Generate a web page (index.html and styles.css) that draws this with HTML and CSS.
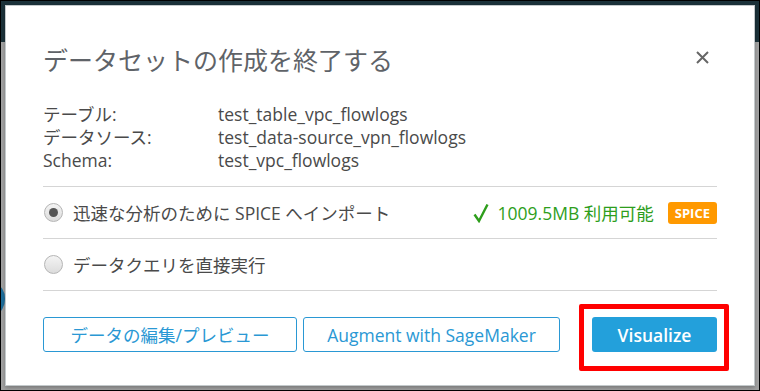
FILE: index.html
```html
<!DOCTYPE html>
<html lang="ja">
<head>
  <meta charset="UTF-8">
  <title>データセットの作成を終了する</title>
  <link rel="stylesheet" href="styles.css">
</head>
<body>
  <div class="screen">
    <span class="bg-dot"></span>
    <div class="modal">
      <div class="modal-head">
        <h1>データセットの作成を終了する</h1>
        <svg class="close" width="13" height="13" viewBox="0 0 13 13"><path d="M1 1 L12 12 M12 1 L1 12" stroke="#666" stroke-width="2"/></svg>
      </div>

      <div class="info">
        <div class="info-row"><span class="info-key">テーブル:</span><span>test_table_vpc_flowlogs</span></div>
        <div class="info-row"><span class="info-key">データソース:</span><span>test_data-source_vpn_flowlogs</span></div>
        <div class="info-row"><span class="info-key">Schema:</span><span>test_vpc_flowlogs</span></div>
      </div>

      <div class="options">
        <div class="option">
          <span class="radio checked"></span>
          <span class="option-label">迅速な分析のために SPICE へインポート</span>
          <span class="capacity">
            <svg class="check" width="16" height="20" viewBox="0 0 16 20"><path d="M1.5 11.5 L6 18 L14.5 1.5" fill="none" stroke="#2e9e1c" stroke-width="2.4"/></svg>
            1009.5MB 利用可能
          </span>
          <span class="badge">SPICE</span>
        </div>
        <div class="option">
          <span class="radio"></span>
          <span class="option-label">データクエリを直接実行</span>
        </div>
      </div>

      <div class="actions">
        <button class="btn btn-outline btn-edit">データの編集/プレビュー</button>
        <button class="btn btn-outline btn-sage">Augment with SageMaker</button>
        <div class="primary-wrap">
          <button class="btn btn-primary">Visualize</button>
          <span class="highlight"></span>
        </div>
      </div>
    </div>
  </div>
</body>
</html>
```

FILE: styles.css
```css
body { margin: 0; font-family: "Open Sans", "Noto Sans CJK JP", sans-serif; }
.screen { position: relative; width: 760px; height: 391px; box-sizing: border-box; border: 1px solid #000; padding: 4px 4px 0 4px; overflow: hidden;
  background: linear-gradient(to bottom, #1b323a 0, #1b323a 41px, #a2a2a2 41px, #a2a2a2 100%); }
.bg-dot { position: absolute; left: -14px; top: 284px; width: 18px; height: 28px; border-radius: 50%; background: #1c6d9b; }
.modal { position: relative; width: 750px; height: 381px; box-sizing: border-box; background: #fff; border: 1px solid #c3c9cb; padding: 0 37px; box-shadow: 0 2px 4px rgba(0,0,0,0.25); }

.modal-head { display: flex; align-items: center; justify-content: space-between; margin-top: 37px; height: 34px; }
h1 { margin: 0; font-size: 25px; font-weight: normal; color: #5f6368; line-height: 34px; }
.close { margin-right: 8px; margin-top: -6px; }

.info { margin-top: 26px; font-size: 17.5px; color: #4a4a4a; }
.info-row { display: flex; line-height: 23px; }
.info-key { width: 175px; }

.options { margin-top: 14px; border-top: 1px solid #d5d5d5; }
.option { display: flex; align-items: center; height: 51px; border-bottom: 1px solid #d5d5d5; font-size: 17.5px; color: #4a4a4a; }
.option-label { margin-left: 10px; flex: 1; }
.radio { width: 17px; height: 17px; border-radius: 50%; border: 1px solid #b5b5b5; background: linear-gradient(#f4f4f4, #dcdcdc); position: relative; margin-left: 1px; }
.radio.checked::after { content: ""; position: absolute; left: 4px; top: 4px; width: 9px; height: 9px; border-radius: 50%; background: #555; }
.capacity { color: #2e9e1c; display: flex; align-items: center; gap: 9px; margin-right: 14px; }
.badge { background: #f90; color: #fff; font-size: 13px; font-weight: bold; border-radius: 3px; padding: 0 7px; height: 22px; line-height: 22px; }

.actions { display: flex; align-items: center; margin-top: 26px; }
.btn { height: 35px; font-family: inherit; font-size: 17.5px; border-radius: 3px; cursor: pointer; }
.btn-outline { background: #fff; border: 1px solid #2a98d4; color: #2a98d4; }
.btn-edit { width: 254px; }
.btn-sage { width: 257px; margin-left: 6px; }
.primary-wrap { position: relative; margin-left: auto; }
.btn-primary { display: block; width: 125px; background: #23a0db; border: none; color: #fff; font-weight: 600; }
.highlight { position: absolute; left: -13px; top: -13px; right: -12px; bottom: -19px; border: 5px solid #f00; border-radius: 2px; }
```
